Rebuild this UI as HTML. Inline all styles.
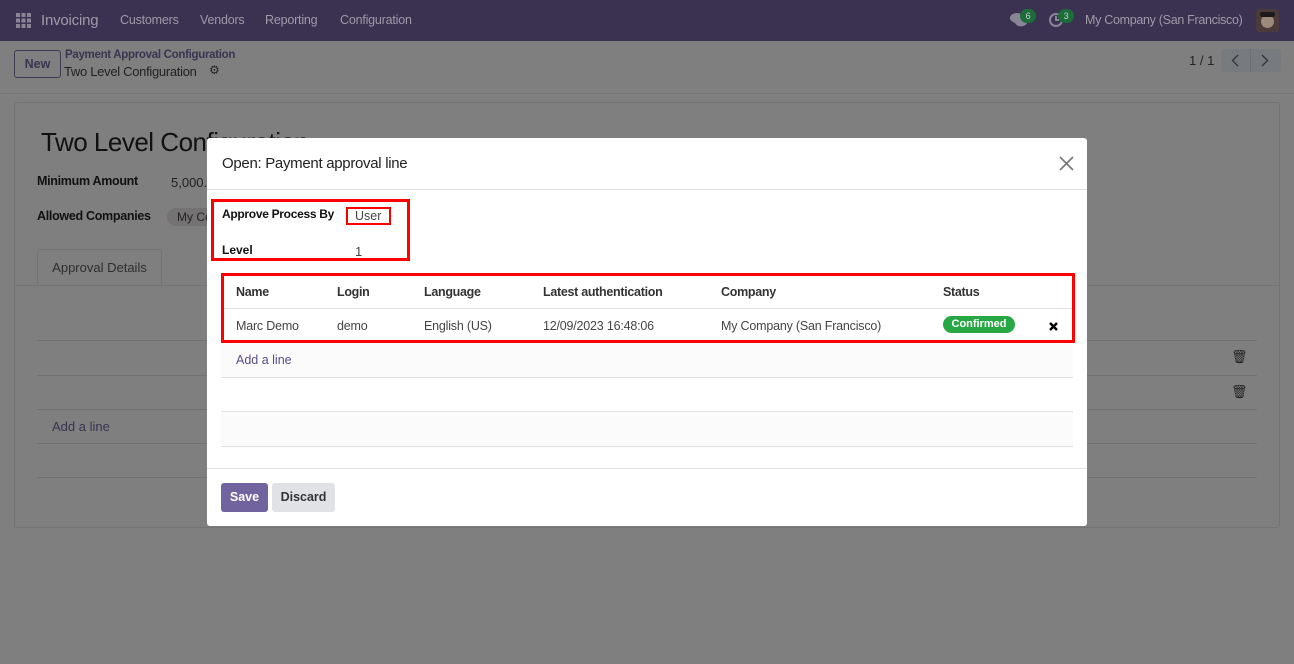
<!DOCTYPE html>
<html><head><meta charset="utf-8">
<style>
*{box-sizing:border-box;margin:0;padding:0}
body{width:1294px;height:664px;overflow:hidden;position:relative;font-family:"Liberation Sans",sans-serif;font-size:13px;background:#7f7f7f;color:#222}
.a{position:absolute;white-space:nowrap}
.nav{position:absolute;left:0;top:0;width:1294px;height:41px;background:#3b3251}
.nav .a{color:#9e9aa8;font-size:12.5px;top:13px;letter-spacing:-0.2px}
.ctl{position:absolute;left:0;top:41px;width:1294px;height:53px;background:#7f7f7f;border-bottom:1px solid #767676}
.card{position:absolute;left:14px;top:102px;width:1266px;height:426px;border:1px solid #747474;border-radius:3px;background:#7f7f7f}
.hl{position:absolute;height:1px;background:#727272}
.modal{position:absolute;left:207px;top:138px;width:880px;height:388px;background:#fff;border-radius:3px}
.m{position:absolute;white-space:nowrap}
.red{position:absolute;border:3px solid #f00}
.gl{position:absolute;left:14px;width:852px;height:1px;background:#dee2e6}
.th{font-weight:bold;color:#333;top:147px;font-size:12.5px;letter-spacing:-0.3px}
.td{color:#444;top:181px;font-size:12.5px;letter-spacing:-0.2px}
</style></head><body>
<div class="nav">
  <svg class="a" style="left:16px;top:13px" width="15" height="15" viewBox="0 0 15 15" fill="#8a8596"><rect x="0" y="0" width="4" height="4"/><rect x="5.5" y="0" width="4" height="4"/><rect x="11" y="0" width="4" height="4"/><rect x="0" y="5.5" width="4" height="4"/><rect x="5.5" y="5.5" width="4" height="4"/><rect x="11" y="5.5" width="4" height="4"/><rect x="0" y="11" width="4" height="4"/><rect x="5.5" y="11" width="4" height="4"/><rect x="11" y="11" width="4" height="4"/></svg>
  <div class="a" style="left:41px;top:12px;font-size:15px">Invoicing</div>
  <div class="a" style="left:120px">Customers</div>
  <div class="a" style="left:200px">Vendors</div>
  <div class="a" style="left:265px">Reporting</div>
  <div class="a" style="left:340px">Configuration</div>
  <svg class="a" style="left:1010px;top:12px" width="18" height="16" viewBox="0 0 18 16" fill="#8a8596"><ellipse cx="7" cy="6" rx="7" ry="5"/><ellipse cx="11" cy="10" rx="6" ry="4.5"/></svg>
  <div class="a" style="left:1020px;top:9px;width:16px;height:14px;border-radius:7px;background:#1d6d3a;color:#ccc;font-size:9px;text-align:center;line-height:14px">6</div>
  <svg class="a" style="left:1048px;top:12px" width="16" height="16" viewBox="0 0 16 16" fill="none" stroke="#8a8596" stroke-width="2"><circle cx="8" cy="8" r="6"/><path d="M8 4v4h3"/></svg>
  <div class="a" style="left:1058px;top:9px;width:16px;height:14px;border-radius:7px;background:#1d6d3a;color:#ccc;font-size:9px;text-align:center;line-height:14px">3</div>
  <div class="a" style="left:1085px;letter-spacing:-0.3px">My Company (San Francisco)</div>
  <div class="a" style="left:1256px;top:9px;width:23px;height:23px;border-radius:3px;background:#4a3a3a"><div style="position:absolute;left:5px;top:6px;width:13px;height:13px;border-radius:50%;background:#9c8a7a"></div><div style="position:absolute;left:4px;top:3px;width:15px;height:5px;background:#1a1a1a;border-radius:3px"></div></div>
</div>
<div class="ctl">
  <div class="a" style="left:14px;top:9px;width:47px;height:28px;border:1px solid #3f3a52;border-radius:3px;color:#3a3450;font-weight:bold;text-align:center;line-height:26px;font-size:12.5px">New</div>
  <div class="a" style="left:65px;top:8px;font-size:11.5px;font-weight:bold;color:#3a3450;letter-spacing:-0.3px">Payment Approval Configuration</div>
  <div class="a" style="left:64px;top:23px;color:#222;font-size:13px;letter-spacing:-0.3px">Two Level Configuration</div>
  <div class="a" style="left:209px;top:22px;font-size:12px;color:#222">⚙</div>
  <div class="a" style="left:1189px;top:12px;color:#222">1 / 1</div>
  <div class="a" style="left:1221px;top:8px;width:60px;height:23px;border-radius:3px;background:#777a7e"></div>
  <div class="a" style="left:1250px;top:8px;width:1px;height:23px;background:#6c6e72"></div>
  <svg class="a" style="left:1231px;top:13px" width="8" height="13" viewBox="0 0 8 13" fill="none" stroke="#333" stroke-width="1.3"><path d="M7 1L1.5 6.5L7 12"/></svg>
  <svg class="a" style="left:1261px;top:13px" width="8" height="13" viewBox="0 0 8 13" fill="none" stroke="#333" stroke-width="1.3"><path d="M1 1L6.5 6.5L1 12"/></svg>
</div>
<div class="card">
  <div class="a" style="left:26px;top:24px;font-size:26px;color:#111;letter-spacing:-0.5px">Two Level Configuration</div>
  <div class="a" style="left:22px;top:71px;font-weight:bold;color:#111;font-size:12.5px;letter-spacing:-0.3px">Minimum Amount</div>
  <div class="a" style="left:156px;top:72px;color:#222">5,000.00</div>
  <div class="a" style="left:22px;top:106px;font-weight:bold;color:#111;font-size:12.5px;letter-spacing:-0.3px">Allowed Companies</div>
  <div class="a" style="left:152px;top:105px;width:60px;height:18px;border-radius:9px;background:#747272;color:#222;padding-left:10px;line-height:18px;font-size:12px">My Co</div>
  <div class="a" style="left:22px;top:146px;width:125px;height:37px;border:1px solid #747474;border-bottom:none;border-radius:3px 3px 0 0;color:#2e2e2e;text-align:center;line-height:36px">Approval Details</div>
  <div class="a" style="left:0;top:182px;width:1264px;height:1px;background:#747474"></div>
  <div class="hl" style="left:22px;width:1220px;top:237px"></div>
  <div class="hl" style="left:22px;width:1220px;top:272px"></div>
  <div class="hl" style="left:22px;width:1220px;top:306px"></div>
  <div class="hl" style="left:22px;width:1220px;top:340px"></div>
  <div class="hl" style="left:22px;width:1220px;top:374px"></div>
  <div class="a" style="left:37px;top:316px;color:#3a3450">Add a line</div>
  <div class="a" style="left:1216px;top:246px;color:#222;font-size:13px">🗑</div>
  <div class="a" style="left:1216px;top:281px;color:#222;font-size:13px">🗑</div>
</div>

<div class="modal">
  <div class="m" style="left:15px;top:17px;font-size:15px;color:#222;letter-spacing:-0.3px">Open: Payment approval line</div>
  <svg class="m" style="left:852px;top:18px" width="15" height="15" viewBox="0 0 15 15" stroke="#777" stroke-width="1.6"><path d="M1 1L14 14M14 1L1 14"/></svg>
  <div class="m" style="left:0;top:51px;width:880px;height:1px;background:#dee2e6"></div>
  <div class="red" style="left:4px;top:61px;width:199px;height:62px"></div>
  <div class="m" style="left:15px;top:69px;font-weight:bold;font-size:12px;color:#111;letter-spacing:-0.3px">Approve Process By</div>
  <div class="red" style="left:139px;top:69px;width:45px;height:18px;border-width:2px"></div>
  <div class="m" style="left:148px;top:71px;color:#444;font-size:12.5px">User</div>
  <div class="m" style="left:15px;top:105px;font-weight:bold;font-size:12px;color:#111">Level</div>
  <div class="m" style="left:148px;top:106px;color:#444">1</div>
  <div class="m" style="left:14px;top:204px;width:852px;height:35px;background:#fbfbfb"></div>
  <div class="m" style="left:14px;top:273px;width:852px;height:35px;background:#fbfbfb"></div>
  <div class="gl" style="top:170px"></div>
  <div class="gl" style="top:239px"></div>
  <div class="gl" style="top:273px"></div>
  <div class="gl" style="top:308px"></div>
  <div class="m th" style="left:29px">Name</div>
  <div class="m th" style="left:130px">Login</div>
  <div class="m th" style="left:217px">Language</div>
  <div class="m th" style="left:336px">Latest authentication</div>
  <div class="m th" style="left:514px">Company</div>
  <div class="m th" style="left:736px">Status</div>
  <div class="m td" style="left:29px">Marc Demo</div>
  <div class="m td" style="left:130px">demo</div>
  <div class="m td" style="left:217px">English (US)</div>
  <div class="m td" style="left:336px">12/09/2023 16:48:06</div>
  <div class="m td" style="left:514px">My Company (San Francisco)</div>
  <div class="m" style="left:736px;top:178px;width:72px;height:17px;border-radius:9px;background:#28a745;color:#fff;font-weight:bold;font-size:11px;text-align:center;line-height:17px">Confirmed</div>
  <svg class="m" style="left:842px;top:184px" width="9" height="9" viewBox="0 0 9 9" stroke="#000" stroke-width="2.4"><path d="M1 1L8 8M8 1L1 8"/></svg>
  <div class="red" style="left:14px;top:135px;width:854px;height:70px"></div>
  <div class="m" style="left:29px;top:215px;color:#5a4a8a;font-size:12.5px">Add a line</div>
  <div class="m" style="left:0;top:330px;width:880px;height:1px;background:#dee2e6"></div>
  <div class="m" style="left:14px;top:345px;width:47px;height:29px;border-radius:3px;background:#71639e;color:#fff;font-weight:bold;text-align:center;line-height:29px;font-size:12.5px">Save</div>
  <div class="m" style="left:65px;top:345px;width:63px;height:29px;border-radius:3px;background:#e0e2e6;color:#333;font-weight:bold;text-align:center;line-height:29px;font-size:12.5px">Discard</div>
</div>
</body></html>
